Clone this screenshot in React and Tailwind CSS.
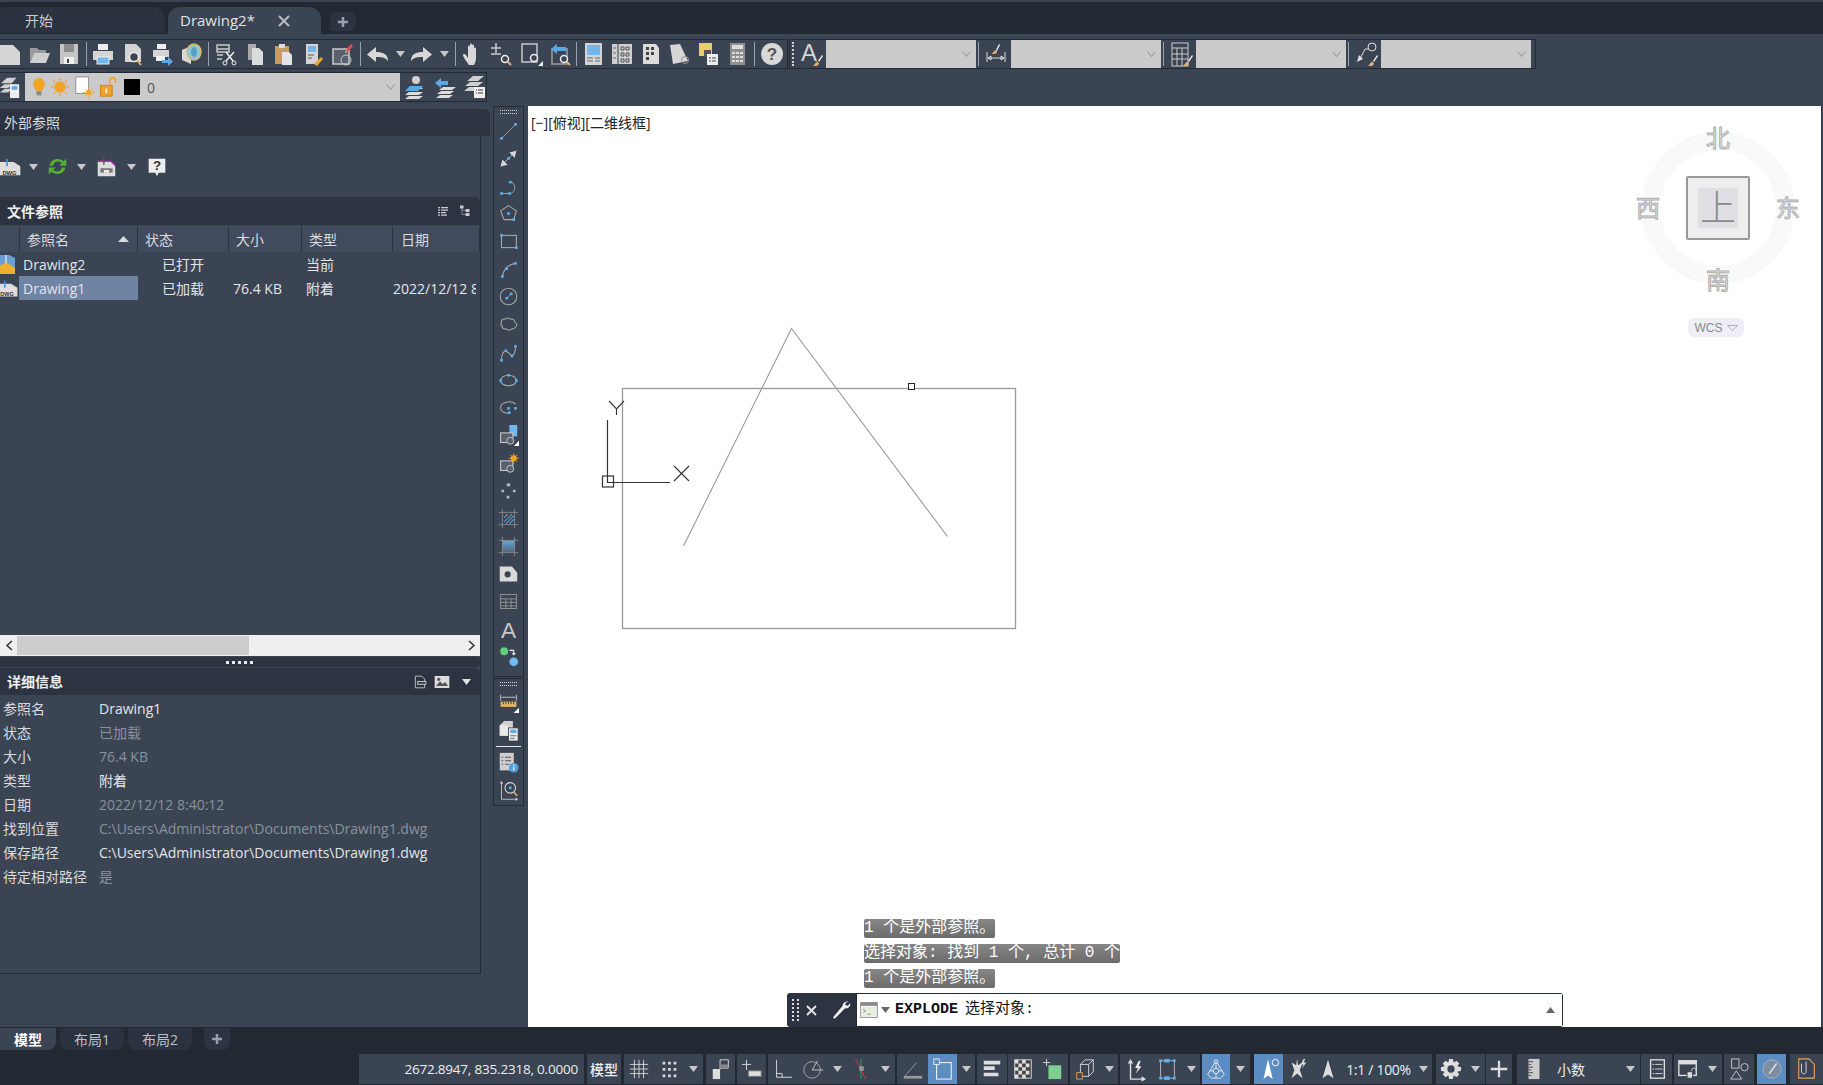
import React from 'react';

const B = '#5ab0f0'; // grip blue used across the draw toolbar
const L = '#c9c9c9';
const OR = '#f0a428';
const PEN = '#e8b070';

const Dot = ({ x, y, c = B }) => <rect x={x - 1.5} y={y - 1.5} width="3" height="3" fill={c} />;
const Brush = ({ x = 0, y = 0 }) => (
  <g transform={`translate(${x} ${y})`}>
    <path d="M16 24c-2 0-3-.5-3-.5 2-.5 2-3 4-4l2 2c-.5 1.500-1.500 2.500-3 2.500z" fill={PEN} />
    <path d="M18 19l4-6 1 1-4 6z" fill="#eee" />
  </g>
);

const ICONS = {
  // standard toolbar
  new: <path d="M1 3h15l7 7v13H1z" fill="#d6d6d6" />,
  open: <g><path d="M3 21V6h7l2 2h7v3H7z" fill="#9a9a9a" /><path d="M3 21l4-10h16l-4 10z" fill="#cfcfcf" /></g>,
  save: <g><path d="M3 2h18v20H3z" fill="#c6c6c6" /><rect x="7" y="2" width="10" height="8" fill="#8d8d8d" /><rect x="7" y="15" width="10" height="7" fill="#f0f0f0" /><rect x="10" y="17" width="2" height="4" fill="#444" /></g>,
  print: <g><rect x="7" y="2" width="10" height="6" fill="#eee" /><path d="M2 9h20v9H2z" fill="#d4d4d4" /><rect x="6" y="15" width="12" height="7" fill="#6fb7ee" stroke="#eee" /></g>,
  preview: <g><path d="M4 2h11l5 5v13H4z" fill="#d4d4d4" /><circle cx="13" cy="15" r="4.500" fill="#3b4453" stroke="#eee" strokeWidth="1.500" /><path d="M16 18l4 5" stroke={PEN} strokeWidth="2" /></g>,
  plot: <g><rect x="7" y="2" width="9" height="5" fill="#eee" /><path d="M3 8h16v7H3z" fill="#d4d4d4" /><rect x="6" y="14" width="9" height="5" fill="#eee" /><path d="M12 18h6v-3l5 4.500-5 4.500v-3h-6z" fill="#5aa9e6" /></g>,
  publish: <g><path d="M3 8l9-4v18l-9-4z" fill="#d8d8d8" /><ellipse cx="15" cy="10" rx="7" ry="8" fill="#8fc7d8" stroke="#d9b860" strokeWidth="1.500" /><ellipse cx="15" cy="10" rx="3" ry="5" fill="#5aa0c0" /></g>,
  cut: <g><path d="M3 3h12v7H3zM3 13h6M3 17h5M3 7h12" stroke={L} strokeWidth="1.500" /><path d="M12 10l7 9M20 10l-8 9" stroke="#eee" strokeWidth="1.500" /><circle cx="11" cy="21" r="2" stroke="#eee" /><circle cx="20" cy="21" r="2" stroke="#eee" /></g>,
  copy: <g><path d="M5 2h8v16H5z" fill="#aaa" /><path d="M9 6h7l4 4v13H9z" fill="#dcdcdc" /></g>,
  paste: <g><rect x="4" y="4" width="14" height="18" fill="#c99a62" /><rect x="8" y="2" width="6" height="4" fill="#ddd" /><path d="M11 10h7l3 3v10H11z" fill="#e4e4e4" /></g>,
  match: <g><rect x="6" y="2" width="12" height="20" fill="#d4d4d4" /><rect x="8" y="4" width="8" height="6" fill="#6fb7ee" /><path d="M8 13h6M8 16h4" stroke="#555" /><path d="M14 22l7-7 2 2-6 7z" fill={OR} /></g>,
  block: <g><rect x="3" y="7" width="16" height="15" stroke={L} strokeWidth="1.500" fill="#59616f" /><circle cx="16" cy="18" r="5" stroke={L} /><path d="M16 8l5-6 2 2-5 6z" fill="#e05050" /><path d="M16 8l2 2-3 1z" fill={PEN} /></g>,
  undo: <path d="M10 5v5c7 0 12 2 12 9-3-4-7-4-12-4v5l-9-7.500z" fill="#d8d8d8" />,
  redo: <path d="M14 5v5C7 10 2 12 2 19c3-4 7-4 12-4v5l9-7.500z" fill="#d8d8d8" />,
  hand: <path d="M8 23c-2-3-6-8-6-10 0-1.500 2-1.500 3 0l2 3V5c0-2 2-2 2 0v6V3c0-2 2-2 2 0v8V4c0-2 2-2 2 0v8V7c0-2 2-2 2 0v9c0 3-1 5-2 7z" fill="#d8d8d8" />,
  zoomrt: <g><path d="M6 1v10M1 6h10M1 12h10" stroke={L} strokeWidth="1.500" /><circle cx="15" cy="17" r="3.500" stroke="#eee" strokeWidth="1.500" /><path d="M18 20l3 3" stroke={PEN} strokeWidth="2" /></g>,
  zoomwin: <g><path d="M3 2h15v18H3z" stroke={L} strokeWidth="1.500" /><circle cx="15" cy="16" r="3.500" stroke="#eee" strokeWidth="1.500" fill="#3b4453" /><path d="M19 24h5v-5z" fill="#eee" /></g>,
  zoomprev: <g><rect x="4" y="7" width="15" height="15" stroke="#888" strokeWidth="2" /><path d="M9 5h9v4h-9v3L3 7l6-5z" fill="#5aa9e6" /><circle cx="16" cy="17" r="3.500" stroke="#eee" strokeWidth="1.500" fill="#3b4453" /><path d="M19 20l3 3" stroke={PEN} strokeWidth="2" /></g>,
  props: <g><rect x="4" y="1" width="17" height="22" fill="#d4d4d4" /><rect x="6" y="3" width="13" height="10" fill="#6fb7ee" /><path d="M6 16h6M14 16h5M6 19h6M14 19h5" stroke="#666" /></g>,
  design: <g><rect x="2" y="2" width="20" height="20" fill="#cfcfcf" /><path d="M8 2v20" stroke="#3b4453" /><path d="M3 6h3M3 11h3M3 16h3" stroke="#666" /><path d="M11 5h3v3h-3zM16 5h3v3h-3zM11 11h3v3h-3zM16 11h3v3h-3zM11 17h3v3h-3zM16 17h3v3h-3z" stroke="#555" /></g>,
  palette: <g><path d="M4 2h13l3 4v16H4z" fill="#dcdcdc" /><path d="M7 5h3v3H7zM12 5h3v3h-3zM7 10h3v3H7zM12 10h3v3h-3zM7 15h3v3H7z" fill="#444" /></g>,
  sheet: <g><path d="M3 3l10-1 8 17-15 3z" fill="#d6d6d6" /><circle cx="18" cy="18" r="3.500" stroke="#999" /></g>,
  markup: <g><rect x="3" y="1" width="13" height="13" fill="#eecb6a" /><rect x="8" y="8" width="7" height="7" fill="#555" /><rect x="11" y="12" width="11" height="11" fill="#eee" /><path d="M13 16h2M16 16h4M13 19h2M16 19h4" stroke="#444" /></g>,
  calc: <g><rect x="5" y="1" width="15" height="22" fill="#8f8f8f" /><rect x="7" y="3" width="11" height="4" fill="#ddd" /><path d="M7 10h3v2H7zM11 10h3v2h-3zM15 10h3v2h-3zM7 14h3v2H7zM11 14h3v2h-3zM15 14h3v2h-3zM7 18h3v2H7zM11 18h3v2h-3zM15 18h3v2h-3z" fill="#ddd" /></g>,
  help: <g><circle cx="12" cy="12" r="11" fill="#d8d8d8" /><text x="12" y="18" textAnchor="middle" fontSize="17" fontWeight="700" fill="#555" fontFamily="Liberation Sans">?</text></g>,
  // style toolbar
  stylea: <g><text x="1" y="19" fontSize="24" fill="#d4d4d4" fontFamily="Liberation Sans">A</text><Brush x="0" y="0" /></g>,
  styledim: <g><path d="M3 10v10M21 10v10M4 16h16M4 16l3-2v4zM20 16l-3-2v4z" stroke="#ddd" /><path d="M10 12c2 0 3-1 3-3l-2-1c-1 2-2 2-3 4z" fill={PEN} /><path d="M12 8l3-6 1 1-3 6z" fill="#eee" /></g>,
  styletable: <g><rect x="3" y="1" width="16" height="23" stroke="#ccc" /><path d="M3 6h16M3 12h16M3 17h16M8 6v18M13 6v18" stroke="#ccc" /><Brush x="1" y="0" /></g>,
  stylemleader: <g><circle cx="18" cy="5" r="4" stroke="#ddd" /><path d="M15 7h-4L6 17" stroke="#ddd" /><path d="M3 20l2-7 4 4z" fill="#ddd" /><Brush x="1" y="0" /></g>,
  // layers
  layerprops: <g><path d="M2 8l7-6h10l-5 6z" fill="#cfcfcf" /><path d="M1 13l5-4h9l-5 4zM1 18l5-4h9l-5 4z" fill="#cfcfcf" /><rect x="12" y="9" width="10" height="15" fill="#eee" /><rect x="14" y="11" width="6" height="4" fill="#5aa9e6" /></g>,
  bulb: <g><ellipse cx="12" cy="9" rx="7" ry="8" fill={OR} /><rect x="9" y="17" width="6" height="5" fill="#8a8a8a" /></g>,
  sun: <g><circle cx="12" cy="12" r="7" fill={OR} /><path d="M12 1v3M12 20v3M1 12h3M20 12h3M4 4l2 2M18 18l2 2M20 4l-2 2M4 20l2-2" stroke={OR} strokeWidth="1.500" /></g>,
  vpfreeze: <g><path d="M3 1h14v18H3z" fill="#fff" stroke="#888" /><circle cx="17" cy="18" r="3" fill={OR} /><path d="M17 12v2M17 22v2M11 18h2M21 18h2M13 14l1 1M20 21l1 1M21 14l-1 1M14 21l-1 1" stroke={OR} /></g>,
  unlock: <g><rect x="3" y="10" width="14" height="13" fill={OR} stroke="#c07f10" /><rect x="9" y="14" width="2" height="5" fill="#fff" /><path d="M14 10V4c0-4 7-4 7 0v3" stroke={OR} strokeWidth="2" /></g>,
  makecur: <g><circle cx="13" cy="5" r="4" fill="#d0d0d0" /><path d="M8 12h10l2 2H6z" fill="#d0d0d0" /><path d="M2 16l5-5h13l-5 5z" fill="#5aa9e6" /><path d="M2 20l4-3h14l-4 3zM2 24l4-3h14l-4 3z" fill="#ddd" /></g>,
  layerprev: <g><path d="M8 3v3h7v4h-7v3L2 8z" fill="#5aa9e6" /><path d="M6 15l4-3h13l-4 3zM4 19l4-3h13l-4 3zM3 23l4-3h13l-4 3z" fill="#ddd" /></g>,
  layerstate: <g><path d="M5 6l6-5h11l-6 5zM3 11l5-4h13l-5 4zM2 16l5-4h13l-5 4z" fill="#cfcfcf" /><rect x="12" y="12" width="11" height="11" fill="#eee" /><path d="M14 15h1M16 15h5M14 18h1M16 18h5" stroke="#333" /></g>,
  // xref panel
  dwg: <g><path d="M-4 6h18l8 5v11H-4z" fill="#dedede" /><path d="M6 2v9" stroke="#4a90d8" strokeWidth="2" /><text x="9" y="21" textAnchor="middle" fontSize="7" fontWeight="700" fill="#333" fontFamily="Liberation Sans">DWG</text></g>,
  refresh: <g><path d="M3 11C4 4 13 1 19 6l3-3v8h-8l3-3c-4-3-9-2-10 3z" fill="#55b030" /><path d="M21 13c-1 7-10 10-16 5l-3 3v-8h8l-3 3c4 3 9 2 10-3z" fill="#55b030" /></g>,
  detach: <g><path d="M2 6h15l5 5v12H2z" fill="#dedede" /><path d="M2 6h15l5 5" stroke="#c020c0" strokeWidth="1.500" /><path d="M9 1v9" stroke="#555" strokeWidth="1.500" /><rect x="5" y="14" width="14" height="5" fill="#777" /><rect x="9" y="16" width="6" height="3" fill="#eee" /></g>,
  qhelp: <g><path d="M2 2h20v17h-8l-2 4-2-4H2z" fill="#eee" /><text x="12" y="16" textAnchor="middle" fontSize="16" fontWeight="700" fill="#333" fontFamily="Liberation Sans">?</text></g>,
  listview: <path d="M2 5h4M8 5h14M2 10h4M8 10h14M2 15h4M8 15h10M2 20h4M8 20h12" stroke="#ccc" strokeWidth="2.500" />,
  treeview: <g><path d="M6 5v14h6M6 11h6" stroke="#ccc" /><rect x="2" y="1" width="7" height="6" fill="#ccc" /><rect x="13" y="8" width="8" height="6" fill="#ccc" /><rect x="13" y="16" width="8" height="6" fill="#ccc" /></g>,
  detfile: <g><path d="M4 2h11l5 5v15H4z" stroke="#ccc" strokeWidth="1.500" /><rect x="8" y="11" width="14" height="5" fill="#3b4453" stroke="#ccc" strokeWidth="1.500" /></g>,
  detimg: <g><rect x="1" y="3" width="22" height="18" fill="#dcdcdc" /><path d="M3 18l6-7 4 4 4-3 4 6z" fill="#555" /><circle cx="7" cy="8" r="2.500" fill="#555" /></g>,
  // draw toolbar
  line: <g><path d="M4 21L20 5" stroke="#aaa" /><Dot x={4} y={21} /><Dot x={20} y={5} /></g>,
  xline: <g><path d="M3 21L21 3" stroke="#bbb" /><path d="M21 3l-8 2 6 6zM3 21l8-2-6-6z" fill="#d8d8d8" /><Dot x={12} y={12} /></g>,
  pline: <g><path d="M4 20h9c8 0 8-13 1-13" stroke="#aaa" /><Dot x={4} y={20} /><Dot x={13} y={20} /><Dot x={14} y={7} /></g>,
  polygon: <g><path d="M12 3l9 6-3 10H7L3 9z" stroke="#aaa" strokeWidth="1.200" /><Dot x={12} y={12} /><Dot x={18} y={19} /></g>,
  rect: <g><rect x="4" y="5" width="17" height="14" stroke="#aaa" strokeWidth="1.200" /><Dot x={4} y={5} /><Dot x={21} y={19} /></g>,
  arc: <g><path d="M5 20C6 12 12 6 20 5" stroke="#aaa" strokeWidth="1.200" /><Dot x={5} y={20} /><Dot x={10} y={11} /><Dot x={20} y={5} /></g>,
  circle: <g><circle cx="12" cy="12" r="9.500" stroke="#aaa" strokeWidth="1.200" /><path d="M11 13l5-5" stroke="#aaa" /><Dot x={10} y={14} /><Dot x={15} y={9} /></g>,
  cloud: <path d="M4 11c-1-3 1-6 4-5 1-2 5-2 6 0 3-1 5 1 5 3 3 1 3 5 1 6-1 2-3 2-4 2-2 2-5 2-6 0-3 1-6-1-5-3-2 0-2-2-1-3z" stroke="#aaa" strokeWidth="1.200" />,
  spline: <g><path d="M4 21c0-6 1-10 5-11l7 6c3-2 4-6 4-11" stroke="#aaa" strokeWidth="1.200" /><Dot x={4} y={21} /><Dot x={9} y={10} /><Dot x={16} y={16} /><Dot x={20} y={5} /></g>,
  ellipse: <g><ellipse cx="12" cy="12" rx="9" ry="6" stroke="#aaa" strokeWidth="1.200" /><Dot x={12} y={6} /><Dot x={3} y={12} /><Dot x={21} y={12} /></g>,
  ellarc: <g><path d="M20 8C14 3 3 6 3 12s8 7 10 6" stroke="#aaa" strokeWidth="1.200" /><Dot x={12} y={13} /><Dot x={20} y={13} /><Dot x={13} y={18} /></g>,
  insert: <g><path d="M13 0h9v13h-9z" fill="#6fb7ee" /><rect x="3" y="9" width="14" height="11" fill="#59616f" stroke="#ccc" strokeWidth="1.200" /><circle cx="14" cy="18" r="4" stroke="#ccc" fill="#59616f" /><path d="M18 24h6v-6z" fill="#fff" /></g>,
  mkblock: <g><rect x="3" y="9" width="14" height="11" fill="#59616f" stroke="#ccc" strokeWidth="1.200" /><circle cx="14" cy="18" r="4" stroke="#ccc" fill="#59616f" /><circle cx="18" cy="6" r="3.500" fill={OR} /><path d="M18 0v3M18 9v3M12 6h3M21 6h3M14 2l2 2M20 8l2 2M22 2l-2 2M16 8l-2 2" stroke={OR} /></g>,
  point: <path d="M10 4h4v3h-4zM4 11h3v3H4zM17 11h3v3h-3zM10 18h3v3h-3z" fill="#bbb" />,
  hatch: <g><path d="M5 1v22M19 1v22M1 5h22M1 19h22" stroke="#8a8a8a" /><path d="M7 11l4-4M7 16l9-9M9 18l9-9M13 18l5-5" stroke="#5aa9e6" strokeWidth="1.200" /></g>,
  gradient: <g><defs><linearGradient id="gr" x1="0" y1="0" x2="0" y2="1"><stop offset="0" stopColor="#5aa9e6" /><stop offset="1" stopColor="#59616f" /></linearGradient></defs><rect x="5" y="5" width="14" height="14" fill="url(#gr)" /><path d="M5 1v22M19 1v22M1 5h22M1 19h22" stroke="#8a8a8a" /></g>,
  region: <g><path d="M2 4h14l6 7v10H2z" fill="#dadada" /><circle cx="11" cy="13" r="3.500" fill="#3b4453" /></g>,
  table: <g><rect x="3" y="4" width="18" height="16" stroke="#999" /><path d="M3 9h18M3 13h18M3 17h18M9 9v11M15 9v11" stroke="#999" /></g>,
  mtext: <text x="12" y="22" textAnchor="middle" fontSize="26" fill="#c8c8c8" fontFamily="Liberation Sans">A</text>,
  addsel: <g><circle cx="7" cy="6" r="4.500" fill="#5fd080" /><circle cx="18" cy="18" r="5" fill="#6fbaf5" /><path d="M13 5h5v5M16 8l2 2 2-2" stroke="#eee" strokeWidth="1.200" /></g>,
  measure: <g><path d="M3 3v7M21 3v7M4 6h16" stroke="#ccc" /><path d="M3 11h18v6H3z" fill="#e4b860" /><path d="M6 11v3M9 11v3M12 11v3M15 11v3M18 11v3" stroke="#333" /><path d="M18 24h6v-6z" fill="#fff" /></g>,
  cube: <g><path d="M2 6l5-5h10v17H2z" fill="#d0d0d0" /><path d="M2 6h10v12H2z" fill="#e8e8e8" /><rect x="12" y="9" width="11" height="15" fill="#eee" stroke="#3b4453" /><rect x="14" y="11" width="7" height="4" fill="#5aa9e6" /><path d="M14 18h7M14 21h5" stroke="#555" /></g>,
  listinfo: <g><rect x="2" y="1" width="16" height="20" fill="#cfcfcf" /><path d="M4 6h2M8 6h7M4 10h2M8 10h7M4 14h2M8 14h5" stroke="#444" /><circle cx="18" cy="18" r="5.500" fill="#4f9ee0" /><rect x="17.300" y="17" width="1.500" height="4" fill="#fff" /><rect x="17.300" y="14.500" width="1.500" height="1.500" fill="#fff" /></g>,
  coordzoom: <g><path d="M4 3v19h18" stroke="#ccc" /><path d="M4 1l-2 3h4zM23 22l-3-2v4z" fill="#ccc" /><circle cx="14" cy="9" r="6" stroke="#ddd" strokeWidth="1.200" /><Dot x={14} y={9} /><path d="M18 14l4 4" stroke={PEN} strokeWidth="2" /></g>,
  // status bar
  grid: <path d="M7 2v20M12 2v20M17 2v20M2 7h20M2 12h20M2 17h20" stroke="#d8d8d8" />,
  snap: <path d="M5 4h3v3H5zM11 4h3v3h-3zM17 4h3v3h-3zM5 11h3v3H5zM11 11h3v3h-3zM17 11h3v3h-3zM5 18h3v3H5zM11 18h3v3h-3zM17 18h3v3h-3z" fill="#d8d8d8" />,
  infer: <g><rect x="3" y="12" width="8" height="11" fill="#ddd" /><path d="M11 12h0V2h9v9h-9" stroke="#ddd" /><rect x="11" y="7" width="9" height="4" fill="#888" /></g>,
  dynin: <g><path d="M6 2v11M1 7h10" stroke="#ddd" /><rect x="8" y="14" width="14" height="6" fill="#ddd" stroke="#777" /></g>,
  ortho: <path d="M5 2v19h17M5 17h6v4" stroke="#ddd" />,
  polar: <g><circle cx="11" cy="13" r="9" stroke="#aaa" /><path d="M11 13h12M11 13l6-10" stroke="#ccc" /></g>,
  track: <g><path d="M6 1l11 22" stroke="#d04040" /><path d="M12 1v22" stroke="#4aa050" /><rect x="10" y="9" width="5" height="5" fill="#999" /></g>,
  iso: <g><path d="M2 21l14-16" stroke="#999" /><path d="M2 21h20" stroke="#999" strokeWidth="3" /></g>,
  osnap: <g><rect x="5" y="5" width="16" height="18" stroke="#eee" strokeWidth="1.200" /><rect x="2" y="1" width="6" height="6" fill="#5b8cc2" stroke="#eee" /></g>,
  lweight: <path d="M3 5h18M3 11h12M3 18h16" stroke="#ddd" strokeWidth="4" />,
  transp: <g><rect x="3" y="2" width="18" height="20" fill="#444" stroke="#ddd" /><path d="M3 2h4v4H3zM11 2h4v4h-4zM7 6h4v4H7zM15 6h4v4h-4zM3 10h4v4H3zM11 10h4v4h-4zM7 14h4v4H7zM15 14h4v4h-4zM3 18h4v4H3zM11 18h4v4h-4z" fill="#ddd" /></g>,
  selcyc: <g><path d="M5 1v8M1 5h8" stroke="#ddd" /><rect x="7" y="8" width="14" height="15" fill="#7fd090" /></g>,
  osnap3d: <g><path d="M7 7l5-5h9v13l-5 5H7zM7 7h9v13M16 7l5-5" stroke="#ddd" /><rect x="3" y="16" width="6" height="7" fill="#3b4453" stroke="#e8a060" /></g>,
  dynucs: <g><path d="M6 5v18h15" stroke="#ddd" strokeWidth="1.500" /><path d="M6 1l-3 5h6zM23 23l-5-3v6z" fill="#ddd" /><path d="M15 3l-4 8h3l-2 6 6-8h-3l2-6z" fill="#eee" /></g>,
  gizmo: <g><rect x="5" y="3" width="15" height="19" stroke="#bbb" /><Dot x={5} y={3} /><Dot x={20} y={3} /><Dot x={5} y={22} /><Dot x={20} y={22} /><rect x="9" y="1" width="6" height="4" fill={B} /><rect x="9" y="20" width="6" height="4" fill={B} /></g>,
  model3d: <g><path d="M12 3l9 15-4 4H7l-4-4z" stroke="#eee" /><circle cx="12" cy="4" r="2" fill="#5b8cc2" stroke="#eee" /><path d="M5 14h14M12 4v18" stroke="#eee" /><circle cx="12" cy="14" r="3" fill="#5b8cc2" stroke="#eee" /></g>,
  anno: <g><path d="M11 1L6 23l5-4 5 4z" fill="#fff" /><circle cx="19" cy="5" r="3.500" stroke="#fff" /></g>,
  annob: <g><path d="M11 1l-1 7-5-3 3 8-3 9 6-5 6 5-3-9 3-8-5 3z" fill="#ddd" /><path d="M18 1l-3 6h3l-2 5 5-7h-3l2-4z" fill="#ddd" /></g>,
  annoc: <path d="M12 2L6 22l6-4 6 4z" fill="#ddd" />,
  gear: <g><path d="M10 1h4l1 4 3-2 3 3-2 3 4 1v4l-4 1 2 3-3 3-3-2-1 4h-4l-1-4-3 2-3-3 2-3-4-1v-4l4-1-2-3 3-3 3 2z" fill="#ddd" /><circle cx="12" cy="12" r="4" fill="#3b4453" /></g>,
  plus: <path d="M12 3v18M3 12h18" stroke="#ddd" strokeWidth="2.500" />,
  ruler: <g><rect x="6" y="1" width="12" height="22" fill="#ccc" /><path d="M6 4h5M6 7h3M6 10h5M6 13h3M6 16h5M6 19h3" stroke="#444" /></g>,
  customize: <g><rect x="5" y="2" width="15" height="20" stroke="#ddd" strokeWidth="1.500" /><path d="M7 7h2M10 7h8M7 12h2M10 12h8M7 17h2M10 17h8" stroke="#ddd" /></g>,
  monitor: <g><rect x="2" y="3" width="19" height="16" stroke="#ddd" strokeWidth="1.500" /><rect x="2" y="3" width="19" height="4" fill="#ddd" /><rect x="11" y="15" width="6" height="7" fill="#ddd" stroke="#3b4453" /><path d="M16 14c0-4 5-4 5 0" stroke="#ddd" /></g>,
  shapes: <g><rect x="4" y="1" width="8" height="10" stroke="#ccc" /><circle cx="18" cy="10" r="4" stroke="#ccc" /><path d="M9 14l6 9H3z" stroke="#ccc" /></g>,
  hwaccel: <g><circle cx="12" cy="12" r="10" fill="#7d8da3" stroke="#aab4c2" /><path d="M9 17L17 6" stroke="#dfe5ec" strokeWidth="1.500" /></g>,
  clipb: <g><path d="M3 1h11l6 6v15H3z" stroke="#e8a060" strokeWidth="1.200" /><path d="M6 6v9c0 3 5 3 5 0V4" stroke="#ddd" /></g>,
  term: <g><rect x="2" y="3" width="20" height="18" fill="#f2f2f2" stroke="#888" /><rect x="2" y="3" width="20" height="4" fill="#8a8a8a" /><path d="M5 11l3 2-3 2M10 17h4" stroke="#444" /><rect x="3" y="8" width="18" height="12" fill="#dfe8c9" opacity=".4" /></g>,
  wrench: <path d="M21 2c-3-1-7 1-7 5L3 20c-1 2 1 3 2 2L17 10c4 1 7-3 6-6l-3 3-3-1 1-3z" fill="#eee" />,
};

const Ic = ({ n, s = 24 }) => (
  <svg width={s} height={s} viewBox="0 0 24 24" fill="none" className="shrink-0 overflow-visible">{ICONS[n]}</svg>
);

const Caret = ({ c = '#c8c8c8', up = false }) => (
  <svg width="9" height="6" viewBox="0 0 9 6" className="shrink-0">
    <path d={up ? 'M0 6h9L4.500 0z' : 'M0 0h9L4.500 6z'} fill={c} />
  </svg>
);

const Btn = ({ n, w = 'w-[29px]', s = 24 }) => (
  <div className={`${w} h-full shrink-0 flex items-center justify-center`}><Ic n={n} s={s} /></div>
);
const Dd = ({ w = 'w-[16px]' }) => (
  <div className={`${w} h-full shrink-0 flex items-center justify-center`}><Caret /></div>
);
const Sep = ({ w = 'w-[5px]' }) => (
  <div className={`${w} h-full shrink-0 flex items-center justify-center`}><div className="w-px h-[24px] bg-[#9aa2ad]" /></div>
);

function Combo({ w = 'w-[150px]' }) {
  return (
    <div className={`${w} h-full bg-[#cacaca] flex items-center justify-end pr-[5px] shrink-0`}>
      <svg width="9" height="6" viewBox="0 0 9 6"><path d="M.5.500l4 5 4-5" stroke="#8f8f8f" fill="none" /></svg>
    </div>
  );
}

function Tabs() {
  return (
    <div className="h-[34px] bg-[#222933] shrink-0 flex items-end border-t-[2px] border-[#3b4453] overflow-hidden">
      <div className="-ml-[6px] w-[171px] h-[26px] mb-[1px] bg-[#2b3240] rounded-t-[12px] flex items-center pl-[31px] text-[14px] text-[#c8ccd2]">开始</div>
      <div className="ml-[3px] w-[153px] h-[27px] bg-[#3b4453] rounded-t-[12px] flex items-center pl-[12px] text-[15px] text-[#dfe2e6]">
        Drawing2*
        <svg width="12" height="12" viewBox="0 0 12 12" className="ml-[23px]"><path d="M1 1l10 10M11 1L1 11" stroke="#b8bcc4" strokeWidth="2" /></svg>
      </div>
      <div className="ml-[9px] w-[26px] h-[19px] mb-[3px] bg-[#2d3340] rounded-t-[6px] rounded-br-[8px] flex items-center justify-center">
        <svg width="12" height="12" viewBox="0 0 12 12"><path d="M6 1v10M1 6h10" stroke="#9aa0aa" strokeWidth="2.500" /></svg>
      </div>
    </div>
  );
}

function Toolbars() {
  return (
    <div className="h-[72px] bg-[#3b4453] shrink-0 overflow-hidden pt-[5px]">
      <div className="h-[30px] flex items-stretch">
        <div className="-ml-[7px] w-[795px] flex items-center border border-[#232a35]">
          <Btn n="new" w="w-[30px]" /><Btn n="open" w="w-[30px]" /><Btn n="save" w="w-[30px]" /><Sep w="w-[4px]" />
          <Btn n="print" w="w-[30px]" /><Btn n="preview" w="w-[30px]" /><Btn n="plot" w="w-[28px]" /><Btn n="publish" w="w-[30px]" /><Sep />
          <Btn n="cut" w="w-[30px]" /><Btn n="copy" w="w-[28px]" /><Btn n="paste" w="w-[28px]" /><Btn n="match" w="w-[30px]" /><Btn n="block" w="w-[30px]" /><Sep w="w-[6px]" />
          <Btn n="undo" w="w-[30px]" /><Dd w="w-[14px]" /><Btn n="redo" w="w-[28px]" /><Dd w="w-[18px]" /><Sep />
          <Btn n="hand" /><Btn n="zoomrt" /><Btn n="zoomwin" /><Btn n="zoomprev" /><Sep />
          <Btn n="props" w="w-[28px]" /><Btn n="design" /><Btn n="palette" /><Btn n="sheet" w="w-[28px]" /><Btn n="markup" /><Btn n="calc" /><Sep w="w-[7px]" />
          <Btn n="help" w="w-[28px]" />
        </div>
        <div className="ml-[1px] w-[747px] flex items-center border border-[#232a35]">
          <div className="w-[5px] h-[24px] ml-[2px] border-l-2 border-dotted border-[#cfd3d8]" />
          <Btn n="stylea" w="w-[29px]" />
          <Combo />
          <Sep w="w-[5px]" /><Btn n="styledim" w="w-[30px]" />
          <Combo />
          <Sep w="w-[5px]" /><Btn n="styletable" w="w-[30px]" />
          <Combo />
          <Sep w="w-[5px]" /><Btn n="stylemleader" w="w-[30px]" />
          <Combo />
        </div>
      </div>
      <div className="mt-[3px] h-[30px] flex items-stretch">
        <div className="-ml-[7px] w-[494px] flex items-center border border-[#232a35]">
          <Btn n="layerprops" w="w-[31px]" s={22} />
          <div className="w-[375px] h-full bg-[#cacaca] flex items-center pl-[3px] pr-[5px] shrink-0">
            <Btn n="bulb" w="w-[21px]" s={20} /><Btn n="sun" w="w-[22px]" s={20} /><Btn n="vpfreeze" w="w-[26px]" s={22} /><Btn n="unlock" w="w-[22px]" s={20} />
            <div className="ml-[5px] w-[16px] h-[16px] bg-black" />
            <span className="ml-[7px] text-[14px] text-[#555]">0</span>
            <svg width="9" height="6" viewBox="0 0 9 6" className="ml-auto"><path d="M.5.500l4 5 4-5" stroke="#8f8f8f" fill="none" /></svg>
          </div>
          <Btn n="makecur" w="w-[30px]" /><Btn n="layerprev" w="w-[30px]" /><Btn n="layerstate" w="w-[28px]" />
        </div>
      </div>
    </div>
  );
}

const COLS = [
  ['w-[20px]', ''],
  ['w-[118px] pl-[7px]', '参照名'],
  ['w-[91px] pl-[7px]', '状态'],
  ['w-[73px] pl-[7px]', '大小'],
  ['w-[91px] pl-[7px]', '类型'],
  ['w-[87px] pl-[8px]', '日期'],
];

const DETAILS = [
  ['参照名', 'Drawing1', 'text-[#e2e4e8]'],
  ['状态', '已加载', 'text-[#8a919c]'],
  ['大小', '76.4 KB', 'text-[#8a919c]'],
  ['类型', '附着', 'text-[#e2e4e8]'],
  ['日期', '2022/12/12 8:40:12', 'text-[#8a919c]'],
  ['找到位置', 'C:\\Users\\Administrator\\Documents\\Drawing1.dwg', 'text-[#8a919c]'],
  ['保存路径', 'C:\\Users\\Administrator\\Documents\\Drawing1.dwg', 'text-[#e2e4e8]'],
  ['待定相对路径', '是', 'text-[#8a919c]'],
];

function XrefPanel() {
  return (
    <div className="w-[493px] shrink-0 pt-[3px]">
      <div className="w-[490px] h-[27px] bg-[#2d3340] rounded-tr-[6px] flex items-center pl-[4px] text-[14px] text-[#d8dade]">外部参照</div>
      <div className="w-[481px] h-[838px] border-r border-b border-[#252b36] flex flex-col">
        <div className="h-[61px] shrink-0 flex items-center pt-[-2px] overflow-hidden">
          <Btn n="dwg" w="w-[24px]" s={20} /><Dd w="w-[18px]" />
          <Btn n="refresh" w="w-[30px]" s={21} /><Dd w="w-[18px]" />
          <Btn n="detach" w="w-[32px]" s={21} /><Dd w="w-[18px]" />
          <Btn n="qhelp" w="w-[34px]" s={20} />
        </div>
        <div className="h-[28px] shrink-0 bg-[#2d3340] rounded-tr-[6px] flex items-center pl-[7px] text-[14px] font-bold text-[#eceef0]">
          文件参照
          <div className="ml-auto mr-[9px] flex items-center gap-[10px]"><Ic n="listview" s={12} /><Ic n="treeview" s={12} /></div>
        </div>
        <div className="mt-[1px] h-[26px] shrink-0 bg-[#414b5d] flex text-[14px] text-[#d8dade]">
          {COLS.map(([w, label], i) => (
            <div key={i} className={`${w} shrink-0 flex items-center border-r border-[#2d3340] relative`}>
              {label}
              {i === 1 && <div className="absolute right-[8px] top-[10px]"><svg width="11" height="6" viewBox="0 0 11 6"><path d="M0 6h11L5.500 0z" fill="#d8dade" /></svg></div>}
            </div>
          ))}
        </div>
        <div className="h-[383px] shrink-0 text-[14px] text-[#e2e4e8] overflow-hidden">
          <div className="h-[24px] flex items-center">
            <div className="w-[19px] shrink-0 -ml-[4px] mr-[4px] flex">
              <svg width="19" height="20" viewBox="0 0 19 20"><path d="M0 1h13l6 3v16H0z" fill="#6b9fd4" /><path d="M0 14l10-6 9 6v6H0z" fill="#eeb030" /><path d="M10 1v8" stroke="#fff" /></svg>
            </div>
            <div className="w-[119px] shrink-0 pl-[4px]">Drawing2</div>
            <div className="w-[93px] shrink-0 pl-[24px]">已打开</div>
            <div className="w-[71px] shrink-0 pl-[2px]" />
            <div className="w-[89px] shrink-0 pl-[4px]">当前</div>
          </div>
          <div className="h-[24px] flex items-center">
            <div className="w-[19px] shrink-0 overflow-hidden"><Ic n="dwg" s={19} /></div>
            <div className="w-[119px] shrink-0 pl-[4px] h-full flex items-center bg-[#6f83a3]">Drawing1</div>
            <div className="w-[93px] shrink-0 pl-[24px]">已加载</div>
            <div className="w-[71px] shrink-0 pl-[2px]">76.4 KB</div>
            <div className="w-[89px] shrink-0 pl-[4px]">附着</div>
            <div className="w-[85px] shrink-0 pl-[2px] whitespace-nowrap overflow-hidden">2022/12/12 8:40:12</div>
          </div>
        </div>
        <div className="h-[21px] shrink-0 bg-[#efefef] flex items-center">
          <div className="w-[17px] flex justify-center"><svg width="8" height="11" viewBox="0 0 8 11"><path d="M7 1L2 5.500 7 10" stroke="#333" strokeWidth="1.500" fill="none" /></svg></div>
          <div className="w-[232px] h-[19px] bg-[#cdcdcd]" />
          <div className="ml-auto w-[17px] flex justify-center"><svg width="8" height="11" viewBox="0 0 8 11"><path d="M1 1l5 4.500L1 10" stroke="#333" strokeWidth="1.500" fill="none" /></svg></div>
        </div>
        <div className="mt-[1px] h-[10px] shrink-0 bg-[#2d3340] rounded-r-[4px] flex items-center justify-center gap-[3px] pr-[1px]">
          {[0, 1, 2, 3, 4].map((i) => <div key={i} className="w-[3px] h-[3px] bg-[#e8e8e8]" />)}
        </div>
        <div className="mt-[1px] h-[27px] shrink-0 bg-[#2d3340] rounded-tr-[6px] flex items-center pl-[7px] text-[14px] font-bold text-[#eceef0]">
          详细信息
          <div className="ml-auto mr-[9px] flex items-center">
            <Ic n="detfile" s={14} /><div className="ml-[7px]"><Ic n="detimg" s={16} /></div><div className="ml-[12px]"><Caret c="#dfe2e6" /></div>
          </div>
        </div>
        <div className="text-[14px] mt-[1px]">
          {DETAILS.map(([k, v, c]) => (
            <div key={k} className="h-[24px] flex items-center whitespace-nowrap">
              <div className="w-[99px] shrink-0 pl-[3px] text-[#d8dade]">{k}</div>
              <div className={c}>{v}</div>
            </div>
          ))}
        </div>
      </div>
    </div>
  );
}

const DRAW_TOOLS = ['line', 'xline', 'pline', 'polygon', 'rect', 'arc', 'circle', 'cloud', 'spline', 'ellipse', 'ellarc', 'insert', 'mkblock', 'point', 'hatch', 'gradient', 'region', 'table', 'mtext', 'addsel'];

const Grip = () => (
  <div className="h-[10px] shrink-0 flex items-center justify-center">
    <div className="w-[17px] h-[4px] border-y border-dotted border-[#d8dade]" />
  </div>
);

function DrawToolbar() {
  return (
    <div className="w-[31px] shrink-0 flex flex-col">
      <div className="h-[571px] border border-[#252b36] flex flex-col">
        <Grip />
        {DRAW_TOOLS.map((n) => (
          <div key={n} className="h-[27.700px] shrink-0 flex items-center justify-center"><Ic n={n} s={21} /></div>
        ))}
      </div>
      <div className="mt-[1px] h-[128px] border border-[#252b36] flex flex-col">
        <Grip />
        <div className="h-[27px] flex items-center justify-center"><Ic n="measure" s={21} /></div>
        <div className="h-[28px] flex items-center justify-center"><Ic n="cube" s={21} /></div>
        <div className="h-[5px] flex items-center justify-center"><div className="w-[25px] h-px bg-[#e8e8e8]" /></div>
        <div className="h-[27px] flex items-center justify-center"><Ic n="listinfo" s={21} /></div>
        <div className="h-[28px] flex items-center justify-center"><Ic n="coordzoom" s={21} /></div>
      </div>
    </div>
  );
}

function Compass() {
  const face = "text-[24px] text-[#e6e6e6] [-webkit-text-stroke:1px_#b0b0b0] flex items-center justify-center";
  return (
    <div className="absolute left-[1104px] top-[14px] w-[172px] grid grid-cols-[32px_108px_32px] grid-rows-[36px_104px_40px_auto]">
      <svg width="152" height="152" viewBox="0 0 152 152" className="absolute left-[10px] top-[12px]">
        <circle cx="76" cy="76" r="67" stroke="#f9f9f9" strokeWidth="18" fill="none" />
      </svg>
      <div />
      <div className={`${face} relative`}>北</div>
      <div />
      <div className={`${face} relative`}>西</div>
      <div className="relative flex items-center justify-center">
        <div className="w-[64px] h-[64px] border-2 border-[#999] rounded-[2px] bg-[#eeeeee] flex items-center justify-center">
          <div className="w-[40px] h-[40px] bg-[#e0e0e4] flex items-center justify-center text-[36px] leading-none font-light text-[#8a8a8a]">上</div>
        </div>
      </div>
      <div className={`${face} relative`}>东</div>
      <div />
      <div className={`${face} relative`}>南</div>
      <div />
      <div className="col-span-3 justify-self-center mr-[4px] mt-[18px] w-[56px] h-[19px] rounded-[6px] bg-[#eeeef6] flex items-center justify-center gap-[4px] text-[12px] text-[#8a8a8a] relative [font-family:'Liberation_Sans',sans-serif]">
        WCS
        <svg width="11" height="6" viewBox="0 0 11 6"><path d="M.5.500h10l-5 5z" stroke="#b0b0b8" fill="none" /></svg>
      </div>
    </div>
  );
}

const PILLS = ['1 个是外部参照。', '选择对象: 找到 1 个, 总计 0 个', '1 个是外部参照。'];

function Canvas() {
  return (
    <div className="relative flex-1 ml-[4px] mr-[1px] bg-white border-r border-[#333a46] overflow-hidden">
      <div className="absolute left-[3px] top-[6px] text-[14px] text-[#222]">[−][俯视][二维线框]</div>
      <svg width="1294" height="921" viewBox="528 106 1294 921" fill="none" className="absolute left-0 top-0">
        <rect x="622.500" y="388.500" width="393" height="240" stroke="#999" strokeWidth="1.300" />
        <path d="M683.500 546L791.500 328.500 947.500 536.500" stroke="#999" strokeWidth="1.100" />
        <rect x="908.500" y="383.500" width="6" height="6" fill="#fff" stroke="#222" />
        <path d="M607.500 420v62.500H670" stroke="#333" strokeWidth="1.200" />
        <rect x="602.500" y="476" width="11" height="11" stroke="#333" strokeWidth="1.200" />
        <path d="M674 466l15 15M689 466l-15 15M609 401l7.500 8 7.500-8M616.500 409v6" stroke="#333" strokeWidth="1.100" />
      </svg>
      <Compass />
      <div className="absolute left-[336px] top-[813px] flex flex-col items-start gap-[6px] text-[16px] leading-[19px] text-white [font-family:'Liberation_Mono','Noto_Sans_CJK_SC',monospace]">
        {PILLS.map((p, i) => (
          <div key={i} className="h-[19px] rounded-[2px] bg-gradient-to-b from-[#868686] to-[#6c6c6c] whitespace-pre">{p}</div>
        ))}
      </div>
      <div className="absolute left-[259px] bottom-0 w-[776px] h-[34px] flex rounded-[3px] overflow-hidden">
        <div className="w-[69px] bg-[#2d3340] flex items-center shrink-0">
          <div className="ml-[5px] w-[7px] h-[22px] border-x-2 border-dotted border-[#d8dade]" />
          <svg width="11" height="11" viewBox="0 0 11 11" className="ml-[7px]"><path d="M1 1l9 9M10 1l-9 9" stroke="#e4e4e4" strokeWidth="2" /></svg>
          <div className="ml-[14px]"><Ic n="wrench" s={20} /></div>
        </div>
        <div className="flex-1 bg-white border border-[#252b36] flex items-center text-[#111]">
          <div className="ml-[2px]"><Ic n="term" s={20} /></div>
          <div className="ml-[2px]"><Caret c="#666" /></div>
          <span className="ml-[5px] font-bold text-[15px] [font-family:'Liberation_Mono',monospace]">EXPLODE</span>
          <span className="ml-[7px] text-[15px] [font-family:'Liberation_Mono','Noto_Sans_CJK_SC',monospace]">选择对象:</span>
          <div className="ml-auto mr-[7px]"><Caret c="#666" up /></div>
        </div>
      </div>
    </div>
  );
}

// One cell of the status bar; hl is the blue "on" state
function S({ w, n, hl, ml, s = 22 }) {
  return (
    <div className={`${w} ${ml || ''} h-full shrink-0 flex items-center justify-center ${hl ? 'bg-[#5b8cc2]' : 'bg-[#3b4453]'}`}>
      {n ? <Ic n={n} s={s} /> : <Caret />}
    </div>
  );
}

function StatusArea() {
  return (
    <div className="h-[58px] bg-[#222933] shrink-0 overflow-hidden">
      <div className="h-[23px] flex items-start text-[14px] pt-[1px]">
        <div className="w-[56px] h-[22px] bg-[#3b4453] rounded-br-[8px] flex items-center pl-[14px] font-bold text-white">模型</div>
        <div className="ml-[4px] w-[64px] h-[22px] bg-[#2a3240] rounded-b-[8px] flex items-center justify-center text-[#bcc0c8]">布局1</div>
        <div className="ml-[4px] w-[64px] h-[22px] bg-[#2a3240] rounded-b-[8px] flex items-center justify-center text-[#bcc0c8]">布局2</div>
        <div className="ml-[12px] w-[26px] h-[22px] bg-[#2d3340] rounded-b-[8px] flex items-center justify-center">
          <svg width="12" height="12" viewBox="0 0 12 12"><path d="M6 1v10M1 6h10" stroke="#9aa0aa" strokeWidth="2.500" /></svg>
        </div>
      </div>
      <div className="mt-[4px] h-[30px] flex items-stretch">
        <div className="ml-[359px] w-[225px] shrink-0 bg-[#3b4453] flex items-center justify-end pr-[6px] text-[13.500px] text-[#eceef0] tracking-[-0.2px] whitespace-nowrap">2672.8947, 835.2318, 0.0000</div>
        <div className="ml-[3px] w-[34px] shrink-0 bg-[#3b4453] flex items-center justify-center text-[14px] text-[#eceef0] font-medium">模型</div>
        <S ml="ml-[3px]" w="w-[30px]" n="grid" /><S w="w-[29px]" n="snap" /><S w="w-[20px]" />
        <S ml="ml-[3px]" w="w-[29px]" n="infer" /><S ml="ml-[2px]" w="w-[29px]" n="dynin" /><S ml="ml-[2px]" w="w-[30px]" n="ortho" />
        <S w="w-[30px]" n="polar" /><S w="w-[18px]" /><S w="w-[30px]" n="track" /><S w="w-[19px]" />
        <S ml="ml-[2px]" w="w-[31px]" n="iso" /><S w="w-[29px]" n="osnap" hl /><S w="w-[18px]" />
        <S ml="ml-[2px]" w="w-[30px]" n="lweight" /><S ml="ml-[1px]" w="w-[30px]" n="transp" /><S w="w-[30px]" n="selcyc" />
        <S ml="ml-[2px]" w="w-[30px]" n="osnap3d" /><S w="w-[18px]" />
        <S ml="ml-[2px]" w="w-[32px]" n="dynucs" /><S w="w-[30px]" n="gizmo" /><S w="w-[18px]" />
        <S ml="ml-[2px]" w="w-[28px]" n="model3d" hl /><S w="w-[20px]" />
        <S ml="ml-[4px]" w="w-[29px]" n="anno" hl /><S w="w-[30px]" n="annob" /><S w="w-[29px]" n="annoc" />
        <div className="w-[73px] shrink-0 bg-[#3b4453] flex items-center justify-center text-[14px] text-[#eceef0] tracking-[-0.3px] whitespace-nowrap">1:1 / 100%</div>
        <S w="w-[17px]" />
        <S ml="ml-[4px]" w="w-[29px]" n="gear" /><S w="w-[20px]" />
        <S ml="ml-[1px]" w="w-[26px]" n="plus" />
        <S ml="ml-[5px]" w="w-[33px]" n="ruler" />
        <div className="w-[70px] shrink-0 bg-[#3b4453] flex items-center pl-[7px] text-[14px] text-[#eceef0]">小数</div>
        <S w="w-[20px]" /><S ml="ml-[1px]" w="w-[31px]" n="customize" />
        <S ml="ml-[2px]" w="w-[28px]" n="monitor" /><S w="w-[20px]" />
        <S ml="ml-[2px]" w="w-[30px]" n="shapes" /><S ml="ml-[3px]" w="w-[29px]" n="hwaccel" hl />
        <S ml="ml-[4px]" w="w-[33px]" n="clipb" />
      </div>
    </div>
  );
}

export default function App() {
  return (
    <div className="w-[1823px] h-[1085px] bg-[#3b4453] flex flex-col overflow-hidden [font-family:'Open_Sans','Noto_Sans_CJK_SC',sans-serif]">
      <Tabs />
      <Toolbars />
      <div className="h-[921px] flex shrink-0 bg-[#3b4453]">
        <XrefPanel />
        <DrawToolbar />
        <Canvas />
      </div>
      <StatusArea />
    </div>
  );
}
